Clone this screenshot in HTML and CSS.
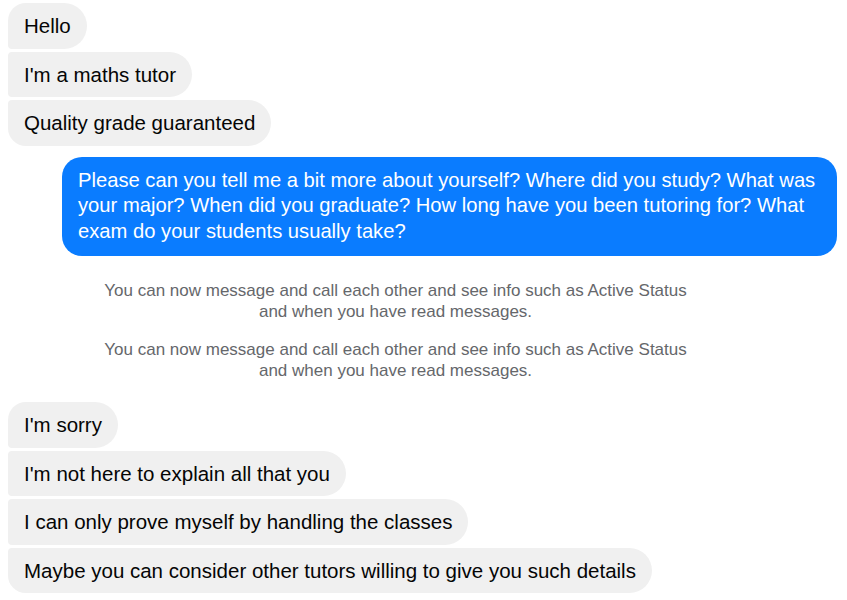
FILE: index.html
```html
<!DOCTYPE html>
<html>
<head>
<meta charset="utf-8">
<link rel="stylesheet" href="styles.css">
</head>
<body>
<div class="chat">
  <div class="group in">
    <div class="bubble">Hello</div>
    <div class="bubble">I'm a maths tutor</div>
    <div class="bubble">Quality grade guaranteed</div>
  </div>
  <div class="group out">
    <div class="bubble">Please can you tell me a bit more about yourself? Where did you study? What was your major? When did you graduate? How long have you been tutoring for? What exam do your students usually take?</div>
  </div>
  <div class="notice">You can now message and call each other and see info such as Active Status<br>and when you have read messages.</div>
  <div class="notice second">You can now message and call each other and see info such as Active Status<br>and when you have read messages.</div>
  <div class="group in last">
    <div class="bubble">I'm sorry</div>
    <div class="bubble">I'm not here to explain all that you</div>
    <div class="bubble">I can only prove myself by handling the classes</div>
    <div class="bubble">Maybe you can consider other tutors willing to give you such details</div>
  </div>
</div>
</body>
</html>
```
FILE: styles.css
```css
html, body {
  margin: 0;
  padding: 0;
  background: #ffffff;
}
body {
  font-family: "Liberation Sans", Arial, sans-serif;
  color: #050505;
}
.chat {
  display: flex;
  flex-direction: column;
  padding: 3px 10px 0 8px;
}
.group {
  display: flex;
  flex-direction: column;
  gap: 3px;
}
.group.in {
  align-items: flex-start;
}
.bubble {
  font-size: 20.5px;
  line-height: 21.5px;
  padding: 12px 16px 12px 16px;
  border-radius: 23px;
}
.in .bubble {
  background: #f0f0f0;
  border-radius: 4px 23px 23px 4px;
}
.in .bubble:first-child {
  border-top-left-radius: 18px;
}
.in .bubble:last-child {
  border-bottom-left-radius: 18px;
}
.out {
  margin-top: 11px;
  align-items: flex-end;
  padding-left: 54px;
}
.out .bubble {
  background: #0a7cff;
  color: #ffffff;
  font-size: 20.2px;
  line-height: 25.5px;
  padding: 11px 12px 12px 16px;
  border-radius: 20px;
}
.notice {
  margin-top: 24px;
  text-align: center;
  font-size: 17px;
  line-height: 21px;
  color: #65676b;
  margin-left: -54px;
}
.notice.second {
  margin-top: 17px;
}
.last {
  margin-top: 21px;
}
```
